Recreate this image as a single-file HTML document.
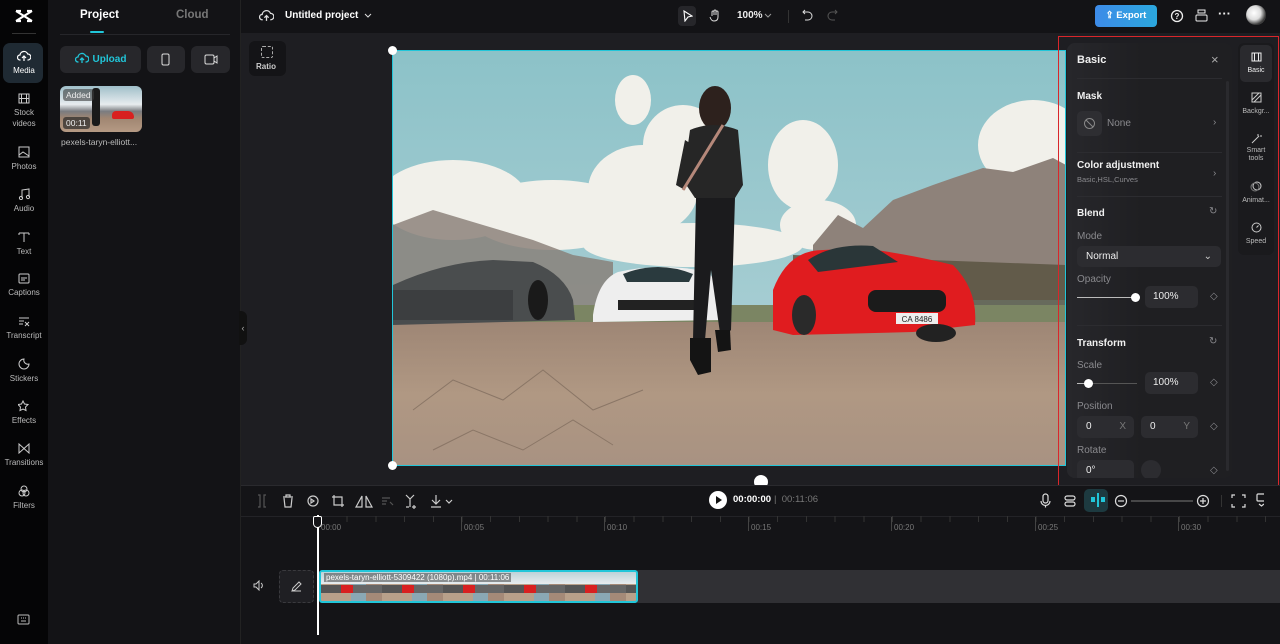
<!DOCTYPE html>
<html><head><meta charset="utf-8"><style>
*{margin:0;padding:0;box-sizing:border-box}
body{width:1280px;height:644px;overflow:hidden;background:#1c1c20;font-family:"Liberation Sans",sans-serif;color:#e8e8ea;position:relative}
.abs{position:absolute}
.rail{left:0;top:0;width:48px;height:644px;background:#050506}
.ri{position:absolute;left:0;width:48px;text-align:center;font-size:8px;color:#bbb;line-height:11px}
.ri svg{display:block;margin:0 auto 3px}
.mp{left:48px;top:0;width:193px;height:644px;background:#131316;border-right:1px solid #222}
.top{left:241px;top:0;width:1039px;height:33px;background:#131316}
.canvas{left:241px;top:33px;width:1039px;height:452px;background:#1e1e22}
.tl{left:241px;top:485px;width:1039px;height:159px;background:#141417;border-top:1px solid #2a2a2e}
.btn{background:#27272b;border-radius:6px}
.pn{left:1067px;top:43px;width:165px;height:435px;background:#1e1e21;border-radius:8px;overflow:hidden}
.lbl{font-size:10px;color:#8a8a8e}
.h{font-size:10px;font-weight:bold;color:#f0f0f0}
.inp{background:#2c2c30;border-radius:5px;font-size:10px;color:#eee}
.sep{height:1px;background:#2c2c30}
</style></head><body>

<!-- left rail -->
<div class="abs rail">
 <svg class="abs" style="left:14px;top:8px" width="20" height="16" viewBox="0 0 20 16"><path d="M2 3 L10 8 L18 3 M2 13 L10 8 L18 13 M2 3h5 M13 3h5 M2 13h5 M13 13h5" stroke="#fff" stroke-width="2.2" fill="none"/></svg>
 <div class="abs" style="left:12px;top:33px;width:24px;height:1px;background:#333"></div>
 <div class="abs" style="left:3px;top:43px;width:40px;height:40px;background:#1f2a33;border-radius:7px"></div>
 <div class="ri" style="top:50px;color:#fff"><svg width="14" height="12" viewBox="0 0 14 12"><path d="M3.5 10H3a2.5 2.5 0 0 1 0-5 4 4 0 0 1 7.7-1A3 3 0 0 1 11 10h-.5M7 11V6M5 8l2-2 2 2" stroke="#fff" fill="none" stroke-width="1.2"/></svg>Media</div>
 <div class="ri" style="top:93px"><svg width="12" height="11"><rect x="1" y="1" width="10" height="9" stroke="#ccc" fill="none"/><path d="M3.5 1v9M8.5 1v9M1 5.5h10" stroke="#ccc"/></svg>Stock<br>videos</div>
 <div class="ri" style="top:146px"><svg width="12" height="12"><rect x="1" y="1" width="10" height="10" stroke="#ccc" fill="none"/><path d="M1 9l4-3 6 4" stroke="#ccc" fill="none"/></svg>Photos</div>
 <div class="ri" style="top:188px"><svg width="12" height="12"><path d="M4 10V2l7-1v8" stroke="#ccc" fill="none"/><circle cx="3" cy="10" r="1.6" stroke="#ccc" fill="none"/><circle cx="10" cy="9" r="1.6" stroke="#ccc" fill="none"/></svg>Audio</div>
 <div class="ri" style="top:231px"><svg width="12" height="12"><path d="M1 2h10M6 2v9M1 2v2M11 2v2" stroke="#ccc" fill="none"/></svg>Text</div>
 <div class="ri" style="top:273px"><svg width="12" height="11"><rect x="1" y="1" width="10" height="9" rx="1" stroke="#ccc" fill="none"/><path d="M3 5h6M3 7h4" stroke="#ccc"/></svg>Captions</div>
 <div class="ri" style="top:316px"><svg width="12" height="11"><path d="M1 2h10M1 5h5M1 8h4M7 6l4 4M11 6l-4 4" stroke="#ccc" fill="none"/></svg>Transcript</div>
 <div class="ri" style="top:358px"><svg width="12" height="12"><path d="M6 1a5 5 0 1 0 5 5 4 4 0 0 1-5-5z" stroke="#ccc" fill="none"/></svg>Stickers</div>
 <div class="ri" style="top:400px"><svg width="12" height="12"><path d="M5 1l1.5 3 3.5.5-2.5 2.5.5 3.5L5 9 2 10.5l.5-3.5L0 4.5 3.5 4z" stroke="#ccc" fill="none"/></svg>Effects</div>
 <div class="ri" style="top:443px"><svg width="12" height="11"><path d="M1 1v9l10-9v9z" stroke="#ccc" fill="none"/></svg>Transitions</div>
 <div class="ri" style="top:485px"><svg width="12" height="12"><circle cx="6" cy="4" r="3" stroke="#ccc" fill="none"/><circle cx="4" cy="8" r="3" stroke="#ccc" fill="none"/><circle cx="8" cy="8" r="3" stroke="#ccc" fill="none"/></svg>Filters</div>
 <svg class="abs" style="left:17px;top:614px" width="13" height="11"><rect x="1" y="1" width="11" height="9" rx="1" stroke="#bbb" fill="none"/><path d="M4 7h5M4 4h1M6 4h1M8 4h1" stroke="#bbb"/></svg>
</div>

<!-- media panel -->
<div class="abs mp">
 <div class="abs" style="left:32px;top:9px;font-size:11.5px;font-weight:bold;color:#fff">Project</div>
 <div class="abs" style="left:128px;top:9px;font-size:11.5px;font-weight:bold;color:#777">Cloud</div>
 <div class="abs" style="left:42px;top:31px;width:14px;height:2px;background:#21c6d9;border-radius:1px"></div>
 <div class="abs" style="left:12px;top:34px;width:170px;height:1px;background:#26262a"></div>
 <div class="abs btn" style="left:12px;top:46px;width:81px;height:27px;color:#21c6d9;font-size:10px;font-weight:bold;line-height:27px;text-align:center"><svg width="14" height="12" style="vertical-align:-2px;margin-right:4px" viewBox="0 0 14 12"><path d="M3.5 10H3a2.5 2.5 0 0 1 0-5 4 4 0 0 1 7.7-1A3 3 0 0 1 11 10h-.5M7 11V6M5 8l2-2 2 2" stroke="#21c6d9" fill="none" stroke-width="1.3"/></svg>Upload</div>
 <div class="abs btn" style="left:99px;top:46px;width:38px;height:27px"><svg class="abs" style="left:14px;top:7px" width="9" height="13"><rect x="1" y="1" width="7" height="11" rx="1.5" stroke="#ddd" fill="none"/></svg></div>
 <div class="abs btn" style="left:143px;top:46px;width:39px;height:27px"><svg class="abs" style="left:13px;top:8px" width="14" height="11"><rect x="1" y="1" width="9" height="9" rx="1.5" stroke="#ddd" fill="none"/><path d="M10 4l3-2v7l-3-2" stroke="#ddd" fill="none"/></svg></div>
 <div class="abs" style="left:12px;top:86px;width:82px;height:46px;border-radius:6px;overflow:hidden;background:linear-gradient(#9fbfc9 0,#e8ecef 40%,#7a7c80 55%,#a08672 70%,#b59a84 100%)">
  <div class="abs" style="left:52px;top:25px;width:22px;height:8px;background:#d82020;border-radius:4px 6px 2px 2px"></div>
  <div class="abs" style="left:32px;top:2px;width:8px;height:38px;background:#1a1a1a;border-radius:3px"></div>
  <div class="abs" style="left:3px;top:3px;font-size:8.5px;background:rgba(60,60,60,.6);padding:1px 3px;border-radius:3px;color:#eee">Added</div>
  <div class="abs" style="left:3px;top:31px;font-size:8.5px;background:rgba(40,40,40,.7);padding:1px 3px;border-radius:3px;color:#eee">00:11</div>
 </div>
 <div class="abs" style="left:13px;top:137px;font-size:8.5px;color:#bbb">pexels-taryn-elliott...</div>
</div>

<!-- top bar -->
<div class="abs top">
 <svg class="abs" style="left:18px;top:9px" width="15" height="13" viewBox="0 0 14 12"><path d="M3.5 10H3a2.5 2.5 0 0 1 0-5 4 4 0 0 1 7.7-1A3 3 0 0 1 11 10h-.5M7 11V6M5 8l2-2 2 2" stroke="#ddd" fill="none" stroke-width="1.2"/></svg>
 <div class="abs" style="left:44px;top:10px;font-size:10px;font-weight:bold;color:#fff">Untitled project</div>
 <svg class="abs" style="left:123px;top:13px" width="8" height="6"><path d="M1 1l3 3 3-3" stroke="#ddd" fill="none"/></svg>
 <div class="abs" style="left:437px;top:6px;width:18px;height:20px;background:#26262a;border-radius:4px"></div>
 <svg class="abs" style="left:442px;top:10px" width="10" height="12"><path d="M1 1l8 5-4 1-3 4z" stroke="#fff" fill="none" stroke-width="1.1"/></svg>
 <svg class="abs" style="left:468px;top:9px" width="11" height="13"><path d="M3 7V3a1 1 0 0 1 2 0v3V2a1 1 0 0 1 2 0v4V3a1 1 0 0 1 2 0v5c0 3-2 4-4 4S2 11 1 8" stroke="#ddd" fill="none"/></svg>
 <div class="abs" style="left:496px;top:10px;font-size:10px;font-weight:bold;color:#eee">100%</div>
 <svg class="abs" style="left:523px;top:13px" width="8" height="6"><path d="M1 1l3 3 3-3" stroke="#999" fill="none"/></svg>
 <div class="abs" style="left:547px;top:10px;width:1px;height:13px;background:#333"></div>
 <svg class="abs" style="left:561px;top:9px" width="11" height="12"><path d="M3 1L1 3l2 2M1 3h5a4 4 0 0 1 0 8H3" stroke="#ddd" fill="none"/></svg>
 <svg class="abs" style="left:586px;top:9px" width="11" height="12"><path d="M8 1l2 2-2 2M10 3H5a4 4 0 0 0 0 8h3" stroke="#555" fill="none"/></svg>
 <div class="abs" style="left:854px;top:5px;width:62px;height:22px;border-radius:4px;background:linear-gradient(90deg,#3d8be8,#2ba7dd);font-size:9.5px;font-weight:bold;color:#fff;line-height:22px;text-align:center">⇪ Export</div>
 <svg class="abs" style="left:929px;top:9px" width="14" height="14"><circle cx="7" cy="7" r="5.5" stroke="#eee" fill="none" stroke-width="1.3"/><text x="7" y="10" font-size="8" text-anchor="middle" fill="#eee" font-family="Liberation Sans" font-weight="bold">?</text></svg>
 <svg class="abs" style="left:954px;top:9px" width="13" height="14"><rect x="3" y="1" width="7" height="3" stroke="#eee" fill="none"/><rect x="1" y="6" width="11" height="6" rx="1" stroke="#eee" fill="none"/></svg>
 <div class="abs" style="left:977px;top:6px;font-size:13px;font-weight:bold;color:#eee">···</div>
 <div class="abs" style="left:1005px;top:5px;width:20px;height:20px;border-radius:50%;background:radial-gradient(circle at 40% 40%,#fff 0,#ddd 40%,#333 70%,#ccc 100%)"></div>
</div>

<!-- canvas -->
<div class="abs canvas">
 <div class="abs" style="left:8px;top:8px;width:37px;height:35px;background:#141417;border-radius:6px"></div>
 <div class="abs" style="left:20px;top:13px;width:12px;height:12px;border:1px dashed #aaa;border-radius:2px"></div>
 <div class="abs" style="left:15px;top:29px;font-size:8px;font-weight:bold;color:#ccc">Ratio</div>
 <div class="abs" style="left:-2px;top:278px;width:8px;height:34px;background:#111;border-radius:0 6px 6px 0;font-size:9px;color:#aaa;line-height:34px;text-align:center">‹</div>
</div>

<!-- video -->
<svg class="abs" style="left:393px;top:50px" width="673" height="416" viewBox="0 0 673 416">
 <defs>
  <linearGradient id="sky" x1="0" y1="0" x2="0" y2="1"><stop offset="0" stop-color="#8cc2c8"/><stop offset="1" stop-color="#b4d3d8"/></linearGradient>
  <linearGradient id="gr" x1="0" y1="0" x2="0" y2="1"><stop offset="0" stop-color="#9e8675"/><stop offset=".5" stop-color="#b09883"/><stop offset="1" stop-color="#a89282"/></linearGradient>
 </defs>
 <rect width="673" height="416" fill="url(#sky)"/>
 <g fill="#f1f0ea">
  <ellipse cx="60" cy="150" rx="75" ry="40"/><ellipse cx="160" cy="165" rx="85" ry="35"/><ellipse cx="250" cy="140" rx="55" ry="45"/>
  <ellipse cx="240" cy="50" rx="18" ry="25"/><ellipse cx="290" cy="95" rx="40" ry="40"/><ellipse cx="410" cy="115" rx="35" ry="45"/>
  <ellipse cx="425" cy="175" rx="38" ry="25"/><ellipse cx="300" cy="195" rx="110" ry="22"/><ellipse cx="640" cy="95" rx="55" ry="45"/><ellipse cx="575" cy="150" rx="25" ry="18"/>
 </g>
 <path d="M420 195 L445 165 L470 178 L500 150 L540 135 L560 128 L590 118 L620 122 L660 108 L673 115 L673 250 L420 250Z" fill="#8e827a"/>
 <path d="M0 175 L40 160 L90 175 L140 190 L180 205 L220 212 L220 260 L0 260Z" fill="#877c74" opacity=".8"/>
 <path d="M400 205 L673 215 L673 270 L400 270Z" fill="#58513f" opacity=".8"/>
 <rect x="0" y="255" width="673" height="25" fill="#7b8563"/>
 <rect x="0" y="272" width="673" height="144" fill="url(#gr)"/>
 <!-- dark car -->
 <path d="M0 235 Q50 212 100 210 L140 212 Q172 225 180 250 L182 270 L0 275Z" fill="#4a4d4e"/>
 <rect x="0" y="240" width="120" height="30" fill="#3c3e40"/>
 <ellipse cx="145" cy="250" rx="10" ry="20" fill="#1a1a1a"/>
 <!-- white car -->
 <path d="M200 265 Q205 230 225 222 Q270 212 315 222 L330 240 L330 270 L200 272Z" fill="#eeeeee"/>
 <path d="M230 224 Q265 210 300 224 L296 232 L234 232Z" fill="#2a3a3e"/>
 <rect x="225" y="250" width="80" height="10" fill="#222"/>
 <!-- red car -->
 <path d="M380 280 L380 240 Q395 200 430 200 L470 198 Q520 205 560 215 Q585 240 582 275 L520 282 L400 285Z" fill="#e01c1f"/>
 <path d="M415 210 Q440 193 480 196 L505 212 L425 222Z" fill="#2a3638"/>
 <rect x="475" y="240" width="78" height="22" rx="8" fill="#1b1b1b"/>
 <rect x="503" y="263" width="42" height="11" fill="#eee"/>
 <text x="524" y="272" font-size="8" text-anchor="middle" font-family="Liberation Sans" fill="#222">CA 8486</text>
 <ellipse cx="411" cy="265" rx="12" ry="20" fill="#2a2a2a"/>
 <ellipse cx="543" cy="283" rx="20" ry="9" fill="#222"/>
 <!-- person -->
 <ellipse cx="322" cy="58" rx="16" ry="22" fill="#2d211d"/>
 <path d="M297 80 Q320 70 345 80 L350 135 L342 148 L302 148 L290 130Z" fill="#262626"/>
 <path d="M292 90 L283 135 L292 140 L300 95Z" fill="#262626"/>
 <path d="M303 148 L342 148 L338 280 L328 290 L318 220 L312 290 L300 290Z" fill="#1b1b1d"/>
 <path d="M297 288 L318 288 L318 322 L305 325 L297 310Z" fill="#141414"/>
 <path d="M322 280 L337 280 L338 300 L325 302Z" fill="#141414"/>
 <path d="M330 75 L290 140" stroke="#b5887a" stroke-width="3"/>
 <!-- cracks -->
 <path d="M20 360 L60 330 L110 350 L150 320 L200 360 L250 340 M40 400 L80 380 L130 400 L180 370 L220 395" stroke="#8a7666" fill="none"/>
</svg>
<div class="abs" style="left:392px;top:50px;width:674px;height:416px;border:1px solid #21c6d9"></div>
<div class="abs" style="left:388px;top:46px;width:9px;height:9px;border-radius:50%;background:#fff"></div>
<div class="abs" style="left:388px;top:461px;width:9px;height:9px;border-radius:50%;background:#fff"></div>
<div class="abs" style="left:754px;top:475px;width:14px;height:14px;border-radius:50%;background:#fff"></div>

<!-- right panel -->
<div class="abs pn" style="background:linear-gradient(90deg,rgba(40,40,44,.92),#1f1f22 45%)">
 <div class="abs h" style="left:10px;top:11px;font-size:11px">Basic</div>
 <div class="abs" style="left:144px;top:9px;font-size:13px;color:#aaa">×</div>
 <div class="abs sep" style="left:10px;top:35px;width:145px"></div>
 <div class="abs h" style="left:10px;top:48px">Mask</div>
 <div class="abs" style="left:10px;top:68px;width:25px;height:25px;background:#2e2e32;border-radius:5px"><svg style="margin:6px" width="13" height="13"><circle cx="6.5" cy="6.5" r="5" stroke="#888" fill="none"/><path d="M3 3l7 7" stroke="#888"/></svg></div>
 <div class="abs lbl" style="left:40px;top:75px">None</div>
 <div class="abs lbl" style="left:146px;top:74px">›</div>
 <div class="abs sep" style="left:10px;top:109px;width:145px"></div>
 <div class="abs h" style="left:10px;top:117px">Color adjustment</div>
 <div class="abs lbl" style="left:10px;top:132px;font-size:7.5px">Basic,HSL,Curves</div>
 <div class="abs lbl" style="left:146px;top:125px">›</div>
 <div class="abs sep" style="left:10px;top:153px;width:145px"></div>
 <div class="abs h" style="left:10px;top:165px">Blend</div>
 <div class="abs lbl" style="left:142px;top:163px">↻</div>
 <div class="abs lbl" style="left:10px;top:188px">Mode</div>
 <div class="abs inp" style="left:10px;top:203px;width:144px;height:21px;line-height:21px;padding-left:9px">Normal<span style="position:absolute;right:9px;color:#ccc">⌄</span></div>
 <div class="abs lbl" style="left:10px;top:231px">Opacity</div>
 <div class="abs" style="left:10px;top:254px;width:60px;height:1px;background:#bbb"></div>
 <div class="abs" style="left:64px;top:250px;width:9px;height:9px;border-radius:50%;background:#fff"></div>
 <div class="abs inp" style="left:78px;top:243px;width:53px;height:22px;line-height:22px;padding-left:8px">100%</div>
 <div class="abs lbl" style="left:143px;top:248px">◇</div>
 <div class="abs sep" style="left:10px;top:282px;width:145px"></div>
 <div class="abs h" style="left:10px;top:295px">Transform</div>
 <div class="abs lbl" style="left:142px;top:293px">↻</div>
 <div class="abs lbl" style="left:10px;top:317px">Scale</div>
 <div class="abs" style="left:10px;top:340px;width:60px;height:1px;background:#555"></div>
 <div class="abs" style="left:10px;top:340px;width:12px;height:1px;background:#bbb"></div>
 <div class="abs" style="left:17px;top:336px;width:9px;height:9px;border-radius:50%;background:#fff"></div>
 <div class="abs inp" style="left:78px;top:329px;width:53px;height:22px;line-height:22px;padding-left:8px">100%</div>
 <div class="abs lbl" style="left:143px;top:334px">◇</div>
 <div class="abs lbl" style="left:10px;top:358px">Position</div>
 <div class="abs inp" style="left:10px;top:373px;width:57px;height:22px;line-height:22px;padding-left:9px">0<span style="position:absolute;right:8px;color:#777">X</span></div>
 <div class="abs inp" style="left:74px;top:373px;width:57px;height:22px;line-height:22px;padding-left:9px">0<span style="position:absolute;right:8px;color:#777">Y</span></div>
 <div class="abs lbl" style="left:143px;top:378px">◇</div>
 <div class="abs lbl" style="left:10px;top:402px">Rotate</div>
 <div class="abs inp" style="left:10px;top:417px;width:57px;height:22px;line-height:22px;padding-left:9px">0°</div>
 <div class="abs" style="left:74px;top:417px;width:20px;height:20px;border-radius:50%;background:#2c2c30"></div>
 <div class="abs lbl" style="left:143px;top:422px">◇</div>
 <div class="abs" style="left:159px;top:38px;width:3px;height:390px;background:#2a2a2e;border-radius:2px"></div>
</div>
<div class="abs" style="left:1238px;top:43px;width:36px;height:212px;background:#1a1a1d;border-radius:6px"></div>
<div class="abs" style="left:1240px;top:45px;width:32px;height:37px;background:#2a2a2e;border-radius:5px"></div>
<div class="ri" style="left:1232px;top:52px;color:#eee;font-size:7px"><svg width="11" height="10"><rect x="1" y="1" width="9" height="8" stroke="#eee" fill="none"/><path d="M3.5 1v8M7.5 1v8" stroke="#eee"/></svg>Basic</div>
<div class="ri" style="left:1232px;top:92px;font-size:7px"><svg width="11" height="11"><rect x="1" y="1" width="9" height="9" stroke="#ccc" fill="none"/><path d="M1 8l7-7M3 10l7-7" stroke="#ccc"/></svg>Backgr...</div>
<div class="ri" style="left:1232px;top:133px;font-size:7px;line-height:8px"><svg width="11" height="11"><path d="M1 10l7-7M7 1v2M9 3h2" stroke="#ccc"/></svg>Smart<br>tools</div>
<div class="ri" style="left:1232px;top:181px;font-size:7px"><svg width="12" height="11"><circle cx="7" cy="5" r="4" stroke="#ccc" fill="none"/><circle cx="5" cy="6" r="4" stroke="#777" fill="none"/></svg>Animat...</div>
<div class="ri" style="left:1232px;top:222px;font-size:7px"><svg width="11" height="11"><circle cx="5.5" cy="5.5" r="4.5" stroke="#ccc" fill="none"/><path d="M5.5 5.5l2-2" stroke="#ccc"/></svg>Speed</div>
<div class="abs" style="left:1058px;top:36px;width:221px;height:456px;border:1.5px solid #d9262b"></div>

<!-- timeline -->
<div class="abs tl">
 <div class="abs" style="left:0;top:30px;width:1039px;height:1px;background:#232327"></div>
 <svg class="abs" style="left:15px;top:7px" width="210" height="16" stroke="#ccc" fill="none" stroke-width="1.2">
  <path d="M2 2h2v12H2M10 2H8v12h2" stroke="#555"/>
  <path d="M27 4h10M30 4V2h4v2M28 5l1 9h6l1-9"/>
  <circle cx="57" cy="8" r="5"/><path d="M55 6l3 2-3 2z"/>
  <path d="M78 2v10h10M76 4h10v10"/>
  <path d="M106 3v11l-6 0zM110 3v11l6 0z"/>
  <path d="M126 5h8M126 8h5M126 11h4M134 9l3 3" stroke="#555"/>
  <path d="M150 2l4 4M158 2l-4 4M154 6v8M150 14h3M158 12v4M156 14h4"/>
  <path d="M180 2v9M176 7l4 4 4-4M175 14h10M190 7l3 3 3-3"/>
 </svg>
 <div class="abs" style="left:468px;top:5px;width:18px;height:18px;border-radius:50%;background:#fff"></div>
 <div class="abs" style="left:475px;top:10px;width:0;height:0;border-left:6px solid #111;border-top:4px solid transparent;border-bottom:4px solid transparent"></div>
 <div class="abs" style="left:492px;top:8px;font-size:9.5px;font-weight:bold;color:#fff">00:00:00</div>
 <div class="abs" style="left:533px;top:8px;font-size:9.5px;color:#777">|&nbsp; 00:11:06</div>
 <svg class="abs" style="left:798px;top:7px" width="225" height="16" stroke="#ddd" fill="none" stroke-width="1.2">
  <rect x="4" y="1" width="5" height="9" rx="2.5"/><path d="M2 8a4.5 4.5 0 0 0 9 0M6.5 12.5v2"/>
  <rect x="26" y="3" width="10" height="4" rx="2"/><rect x="26" y="9" width="10" height="4" rx="2"/>
  <circle cx="82" cy="8" r="5.5"/><path d="M79 8h6"/>
  <path d="M92 8h62" stroke="#666"/>
  <circle cx="164" cy="8" r="5.5"/><path d="M161 8h6M164 5v6"/>
  <path d="M193 5V2h3M203 2h3v3M206 11v3h-3M196 14h-3v-3"/>
  <rect x="218" y="1" width="9" height="7" rx="1"/><path d="M220 11l2.5 2 2.5-2"/>
 </svg>
 <div class="abs" style="left:843px;top:3px;width:24px;height:23px;background:#1d3a40;border-radius:5px"></div>
 <div class="abs" style="left:850px;top:11px;width:4px;height:5px;background:#21c6d9"></div>
 <div class="abs" style="left:856px;top:7px;width:1.5px;height:14px;background:#21c6d9"></div>
 <div class="abs" style="left:860px;top:11px;width:4px;height:5px;background:#21c6d9"></div>
 <div class="abs" style="left:980px;top:9px;width:1px;height:12px;background:#333"></div>
 <!-- ruler -->
 <div class="abs" style="left:77px;top:30px;width:962px;height:6px;background:repeating-linear-gradient(90deg,#333 0 1px,transparent 1px 28.7px)"></div>
 <div class="abs" style="left:80px;top:37px;font-size:8px;color:#777">00:00</div>
 <div class="abs" style="left:220px;top:31px;width:1px;height:14px;background:#444"></div><div class="abs" style="left:223px;top:37px;font-size:8px;color:#777">00:05</div>
 <div class="abs" style="left:363px;top:31px;width:1px;height:14px;background:#444"></div><div class="abs" style="left:366px;top:37px;font-size:8px;color:#777">00:10</div>
 <div class="abs" style="left:507px;top:31px;width:1px;height:14px;background:#444"></div><div class="abs" style="left:510px;top:37px;font-size:8px;color:#777">00:15</div>
 <div class="abs" style="left:650px;top:31px;width:1px;height:14px;background:#444"></div><div class="abs" style="left:653px;top:37px;font-size:8px;color:#777">00:20</div>
 <div class="abs" style="left:794px;top:31px;width:1px;height:14px;background:#444"></div><div class="abs" style="left:797px;top:37px;font-size:8px;color:#777">00:25</div>
 <div class="abs" style="left:937px;top:31px;width:1px;height:14px;background:#444"></div><div class="abs" style="left:940px;top:37px;font-size:8px;color:#777">00:30</div>
 <!-- track -->
 <svg class="abs" style="left:12px;top:94px" width="12" height="11"><path d="M1 4h2l3-3v9L3 7H1z M8 3a3 3 0 0 1 0 5" stroke="#ccc" fill="none"/></svg>
 <div class="abs" style="left:38px;top:84px;width:35px;height:33px;border:1px dashed #3a3a3e;border-radius:4px;background:#1f1f23"></div>
 <svg class="abs" style="left:50px;top:95px" width="11" height="11"><path d="M1 10l1-3 6-6 2 2-6 6z M1 10h9" stroke="#ccc" fill="none"/></svg>
 <div class="abs" style="left:396px;top:84px;width:643px;height:33px;background:#303034"></div>
 <div class="abs" style="left:78px;top:84px;width:319px;height:33px;border:2px solid #21c6d9;border-radius:3px;overflow:hidden;background:repeating-linear-gradient(90deg,#b8a08a 0 30px,#8aa8b4 30px 45px,#a58a78 45px 61px)">
  <div style="position:absolute;left:0;top:0;width:100%;height:12px;background:linear-gradient(#bcd2d8,#e8ecee)"></div>
  <div style="position:absolute;left:0;top:13px;width:100%;height:8px;background:repeating-linear-gradient(90deg,#555 0 20px,#d82020 20px 32px,#666 32px 61px)"></div>
  <div style="position:absolute;left:3px;top:1px;font-size:8px;color:#fff;background:rgba(70,70,70,.55);padding:0 2px;white-space:nowrap">pexels-taryn-elliott-5309422 (1080p).mp4 | 00:11:06</div>
 </div>
 <div class="abs" style="left:76px;top:29px;width:1.5px;height:120px;background:#fff"></div>
 <div class="abs" style="left:72px;top:30px;width:9px;height:12px;border:1.5px solid #fff;border-radius:2px 2px 5px 5px;background:#141417"></div>
</div>
</body></html>
